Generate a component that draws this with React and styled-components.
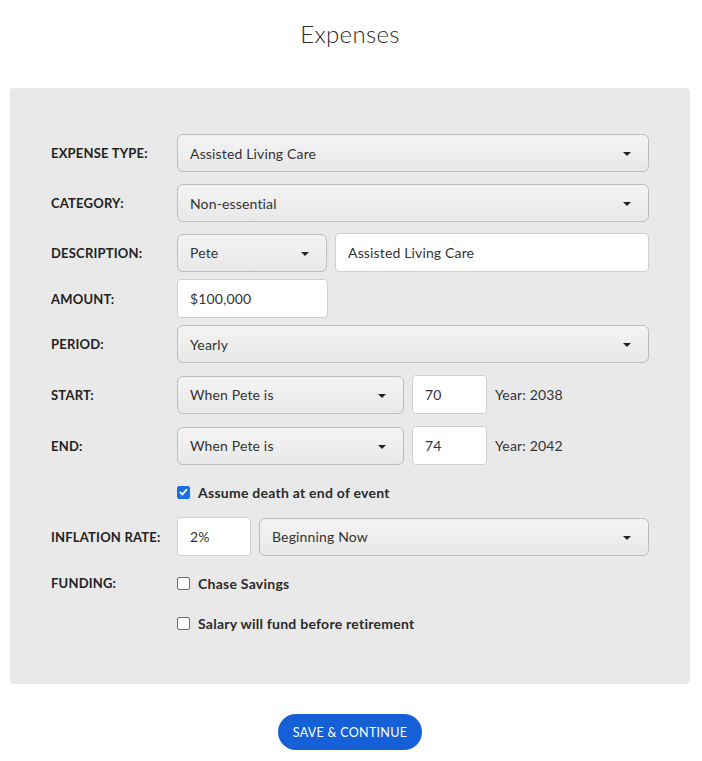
import React from "react";
import styled, { createGlobalStyle } from "styled-components";

const GlobalStyle = createGlobalStyle`
  body {
    margin: 0;
    background: #fff;
    font-family: "Lato", "Open Sans", sans-serif;
    color: #333;
  }
`;

const Page = styled.div`
  width: 700px;
  display: flex;
  flex-flow: column;
  align-items: center;
`;

const Title = styled.h1`
  margin: 18px 0 0;
  height: 32px;
  font-size: 24px;
  font-weight: 300;
  line-height: 32px;
  color: #2b2b2b;
  letter-spacing: 0.3px;
`;

const Panel = styled.section`
  box-sizing: border-box;
  margin-top: 38px;
  width: 680px;
  height: 596px;
  background: #e9e9e9;
  border-radius: 4px;
  padding: 46px 41px 0 41px;
`;

const Row = styled.div`
  display: flex;
  align-items: center;
  margin-top: ${(p) => p.$top || 0}px;
  min-height: ${(p) => p.$h || 38}px;
`;

const Label = styled.div`
  width: 126px;
  flex-shrink: 0;
  font-size: 13px;
  font-weight: 700;
  color: #222;
  letter-spacing: 0.2px;
`;

const Controls = styled.div`
  display: flex;
  align-items: center;
  gap: 8px;
`;

const Select = styled.div`
  box-sizing: border-box;
  position: relative;
  width: ${(p) => p.$w}px;
  height: 38px;
  display: flex;
  align-items: center;
  padding-left: 12px;
  font-size: 14px;
  letter-spacing: 0.15px;
  color: #333;
  background: linear-gradient(#f4f4f4, #e8e8e8);
  border: 1px solid #bcbcbc;
  border-radius: 6px;
  &::after {
    content: "";
    position: absolute;
    right: 17px;
    top: 17px;
    border-left: 4px solid transparent;
    border-right: 4px solid transparent;
    border-top: 4px solid #222;
  }
`;

const Input = styled.div`
  box-sizing: border-box;
  width: ${(p) => p.$w}px;
  height: 39px;
  display: flex;
  align-items: center;
  padding-left: 12px;
  font-size: 14px;
  letter-spacing: 0.15px;
  color: #333;
  background: #fff;
  border: 1px solid #cfcfcf;
  border-radius: 4px;
`;

const YearText = styled.span`
  font-size: 14px;
  letter-spacing: 0.15px;
  color: #333;
`;

const Check = styled.label`
  display: flex;
  align-items: center;
  gap: 8px;
  font-size: 14px;
  font-weight: 700;
  letter-spacing: 0.25px;
  color: #2a2a2a;
`;

const Box = styled.span`
  box-sizing: border-box;
  width: 13px;
  height: 13px;
  border-radius: 2px;
  display: flex;
  align-items: center;
  justify-content: center;
  background: ${(p) => (p.$on ? "#1b6fe3" : "#fff")};
  border: 1px solid ${(p) => (p.$on ? "#1b6fe3" : "#6e6e6e")};
`;

const Indent = styled.div`
  padding-left: 126px;
`;

const Button = styled.button`
  margin-top: 30px;
  width: 144px;
  height: 36px;
  border: none;
  border-radius: 18px;
  background: #1560d6;
  color: #fff;
  font-family: inherit;
  font-size: 12.5px;
  letter-spacing: 0.3px;
  text-transform: uppercase;
`;

const CheckBox = ({ on, children }) => (
  <Check>
    <Box $on={on}>
      {on && (
        <svg width="9" height="8" viewBox="0 0 9 8">
          <path d="M1 4.2 L3.4 6.5 L8 1.2" fill="none" stroke="#fff" strokeWidth="1.8" />
        </svg>
      )}
    </Box>
    {children}
  </Check>
);

export default function App() {
  return (
    <Page>
      <GlobalStyle />
      <Title>Expenses</Title>
      <Panel>
        <Row>
          <Label>EXPENSE TYPE:</Label>
          <Select $w={472}>Assisted Living Care</Select>
        </Row>
        <Row $top={12}>
          <Label>CATEGORY:</Label>
          <Select $w={472}>Non-essential</Select>
        </Row>
        <Row $top={11}>
          <Label>DESCRIPTION:</Label>
          <Controls>
            <Select $w={150}>Pete</Select>
            <Input $w={314}>Assisted Living Care</Input>
          </Controls>
        </Row>
        <Row $top={7}>
          <Label>AMOUNT:</Label>
          <Input $w={151}>$100,000</Input>
        </Row>
        <Row $top={7}>
          <Label>PERIOD:</Label>
          <Select $w={472}>Yearly</Select>
        </Row>
        <Row $top={12}>
          <Label>START:</Label>
          <Controls>
            <Select $w={227}>When Pete is</Select>
            <Input $w={75}>70</Input>
            <YearText>Year: 2038</YearText>
          </Controls>
        </Row>
        <Row $top={12}>
          <Label>END:</Label>
          <Controls>
            <Select $w={227}>When Pete is</Select>
            <Input $w={75}>74</Input>
            <YearText>Year: 2042</YearText>
          </Controls>
        </Row>
        <Indent>
          <Row $top={14} $h={26}>
            <CheckBox on>Assume death at end of event</CheckBox>
          </Row>
        </Indent>
        <Row $top={12}>
          <Label>INFLATION RATE:</Label>
          <Controls>
            <Input $w={74}>2%</Input>
            <Select $w={390}>Beginning Now</Select>
          </Controls>
        </Row>
        <Row $top={14} $h={26}>
          <Label>FUNDING:</Label>
          <CheckBox>Chase Savings</CheckBox>
        </Row>
        <Indent>
          <Row $top={14} $h={26}>
            <CheckBox>Salary will fund before retirement</CheckBox>
          </Row>
        </Indent>
      </Panel>
      <Button>Save &amp; Continue</Button>
    </Page>
  );
}
